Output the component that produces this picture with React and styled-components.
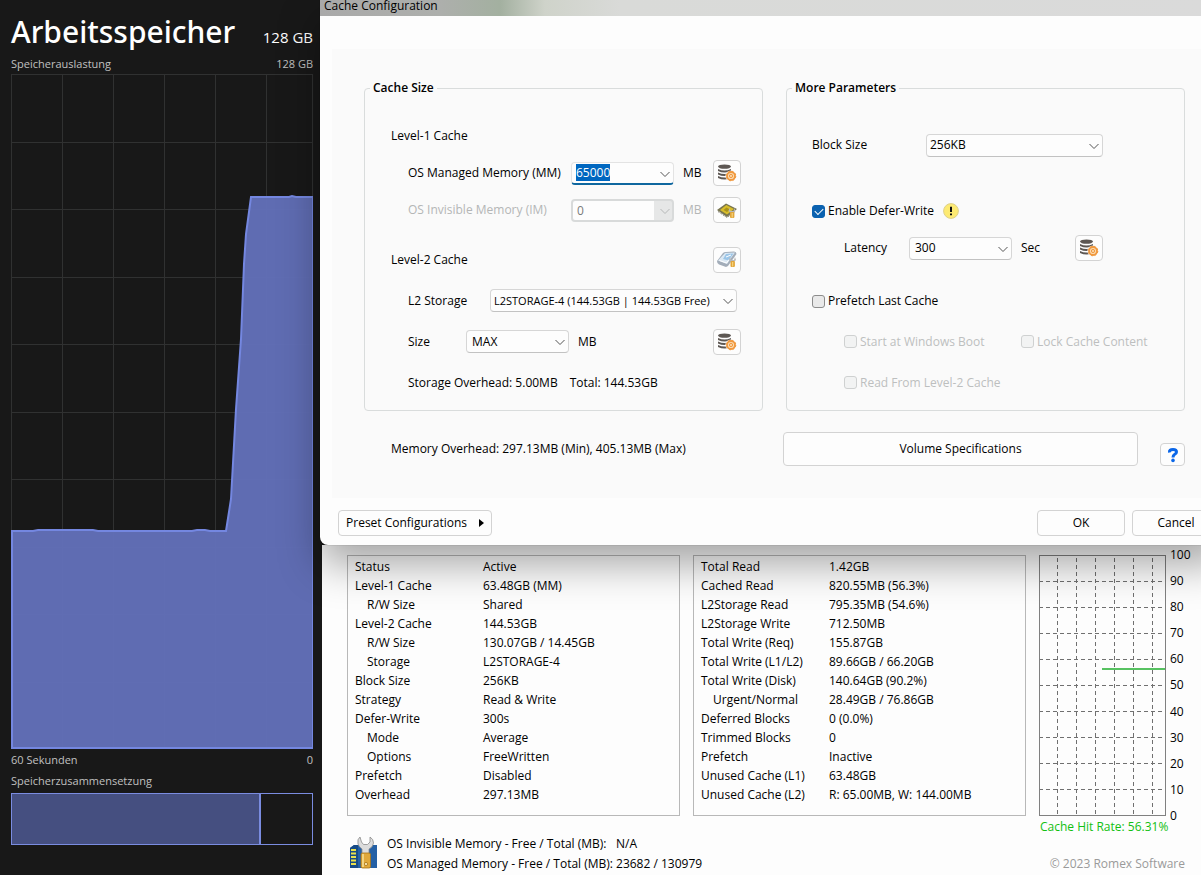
import React, { useEffect, useRef, useState } from 'react'
import styled, { createGlobalStyle } from 'styled-components'

const GlobalStyle = createGlobalStyle`
  * {
    box-sizing: border-box;
  }
  body {
    margin: 0;
    background: #181818;
    overflow-x: hidden;
  }
  body, button, input, select {
    font-family: "Open Sans", "Noto Sans", sans-serif;
    font-size: 12px;
    line-height: 16px;
    color: #000;
  }
`

const Desktop = styled.div`
  display: flex;
  min-height: 100vh;
  overflow: hidden;
`

/* ---------- task manager ---------- */

const Monitor = styled.section`
  flex: none;
  width: 320px;
  padding: 10px 7px 30px 11px;
  display: flex;
  flex-direction: column;
  color: #c0c0c0;
  font-size: 11px;
`

const MonitorHead = styled.header`
  display: flex;
  justify-content: space-between;
  align-items: baseline;
  height: 45px;
  color: #fff;
`

const MonitorTitle = styled.h1`
  margin: 0;
  font-family: "Noto Sans", sans-serif;
  font-size: 30px;
  line-height: 44px;
  font-weight: 500;
`

const Capacity = styled.span`
  font-size: 15px;
`

const Caption = styled.div`
  display: flex;
  justify-content: space-between;
  line-height: ${(p) => p.$height || 18}px;
`

const UsageChart = styled.svg`
  display: block;
  flex: 1;
  width: 100%;
  min-height: 300px;
  margin-top: 1px;
`

const Composition = styled.div`
  display: flex;
  height: 52px;
  margin-top: 2px;
  border: 1px solid #7a8ce0;
`

const InUse = styled.div`
  width: 83%;
  background: #454f80;
  border-right: 2px solid #7a8ce0;
`

const USAGE =
  'M0 457 H22 L27 456 H82 L87 457 H181 L186 456 H194 L199 457 H215 L220 425 L225 335 L230 265 L233 190 L235 160 L240 123 H278 L281 122 L285 123 H302'

function MemoryMonitor() {
  return (
    <Monitor>
      <MonitorHead>
        <MonitorTitle>Arbeitsspeicher</MonitorTitle>
        <Capacity>128 GB</Capacity>
      </MonitorHead>
      <Caption>
        <span>Speicherauslastung</span>
        <span>128 GB</span>
      </Caption>
      <UsageChart viewBox="0 0 302 675" preserveAspectRatio="none" fill="none">
        <g stroke="#303131">
          {[51, 102, 153, 204, 255].map((x) => (
            <path key={x} d={`M${x + 0.5} 0 V675`} />
          ))}
          {[68, 135, 203, 270, 338, 405, 473, 540, 608].map((y) => (
            <path key={y} d={`M0 ${y + 0.5} H302`} />
          ))}
          <rect x="0.5" y="0.5" width="301" height="674" />
        </g>
        <path d={`${USAGE} V675 H0 Z`} fill="#6371bb" fillOpacity="0.95" />
        <path d={`${USAGE} V674 H1 V457`} stroke="#7487e0" strokeWidth="2" />
      </UsageChart>
      <Caption $height={22}>
        <span>60 Sekunden</span>
        <span>0</span>
      </Caption>
      <Caption $height={20}>Speicherzusammensetzung</Caption>
      <Composition>
        <InUse />
      </Composition>
    </Monitor>
  )
}

/* ---------- shared controls ---------- */

const Button = styled.button`
  width: ${(p) => p.$width || 88}px;
  height: ${(p) => p.$height || 26}px;
  padding: 0;
  display: flex;
  align-items: center;
  justify-content: center;
  flex: none;
  background: #fdfdfd;
  border: 1px solid #d3d3d3;
  border-radius: 4px;
`

const SelectBox = styled.div`
  position: relative;
  flex: none;
  width: ${(p) => p.$width}px;
`

const Select = styled.select`
  appearance: none;
  width: 100%;
  height: 23px;
  padding: 0 14px 0 ${(p) => p.$pad || 3}px;
  font-size: ${(p) => (p.$dense ? 11 : 12)}px;
  background: #fdfdfd;
  border: 1px solid #d6d6d6;
  border-bottom-color: #c2c2c2;
  border-radius: 4px;
`

const Arrow = styled.svg`
  position: absolute;
  right: 4px;
  top: 7px;
  width: 10px;
  height: 10px;
  pointer-events: none;
`

const ComboInput = styled.input`
  display: block;
  width: 100%;
  height: 23px;
  padding: 0 24px 0 4px;
  background: #fdfdfd;
  border: 1px solid #e3e3e3;
  border-bottom: 2px solid #0f679f;
  border-radius: 4px;
  outline: none;

  &::selection {
    background: #0067c0;
    color: #fff;
  }

  &:disabled {
    color: #7a7a7a;
    border: 2px solid #d8dada;
    background: linear-gradient(to right, #fdfdfd calc(100% - 18px), #e6e7e7 0);
  }
`

const Check = styled.label`
  display: flex;
  align-items: center;
  gap: 3px;
  width: ${(p) => (p.$width ? p.$width + 'px' : 'auto')};
  color: ${(p) => (p.$off ? '#bdbfbf' : '#000')};
`

const Tick = styled.input`
  appearance: none;
  width: 13px;
  height: 13px;
  margin: 0;
  display: grid;
  place-items: center;
  background: #e9e9e9;
  border: 1px solid #8c8c8c;
  border-radius: 3px;

  &:checked {
    background: #0b62b0;
    border-color: #0b62b0;
  }

  &:checked::after {
    content: '';
    width: 7px;
    height: 4px;
    margin-top: -2px;
    border-left: 1px solid #fff;
    border-bottom: 1px solid #fff;
    transform: rotate(-45deg);
  }

  &:disabled {
    background: #f2f3f3;
    border-color: #cfd1d1;
  }
`

function Chevron({ color = '#555' }) {
  return (
    <Arrow viewBox="0 0 10 10" fill="none" stroke={color} strokeWidth="1">
      <path d="M0.5 3 L5 7.5 L9.5 3" />
    </Arrow>
  )
}

function DropDown({ id, width, pad, dense, value }) {
  return (
    <SelectBox $width={width}>
      <Select id={id} $pad={pad} $dense={dense} defaultValue={value}>
        <option>{value}</option>
      </Select>
      <Chevron />
    </SelectBox>
  )
}

function CheckBox({ label, disabled, defaultChecked, width }) {
  return (
    <Check $off={disabled} $width={width}>
      <Tick type="checkbox" disabled={disabled} defaultChecked={defaultChecked} />
      {label}
    </Check>
  )
}

/* ---------- icons ---------- */

function DatabaseIcon() {
  return (
    <svg width="20" height="18" viewBox="0 0 20 18">
      <ellipse cx="7.5" cy="2.6" rx="6.5" ry="2.2" fill="#5d5753" />
      <path d="M1 5 Q7.5 8 14 5 V7 Q7.5 10 1 7 Z" fill="#5d5753" />
      <path d="M1 8.6 Q7.5 11.6 14 8.6 V10.4 Q7.5 13.4 1 10.4 Z" fill="#5d5753" />
      <path d="M1 12 Q7.5 15 14 12 V14 Q7.5 17 1 14 Z" fill="#5d5753" />
      <circle cx="14" cy="12" r="5.6" fill="#fdfdfd" />
      <circle cx="14" cy="12" r="4" fill="#fbd9ae" stroke="#f0993f" strokeWidth="1.8" />
      <circle cx="14" cy="12" r="4.8" fill="none" stroke="#f0993f" strokeWidth="1" strokeDasharray="2 1.77" />
      <circle cx="14" cy="12" r="1.6" fill="none" stroke="#f0993f" strokeWidth="1" />
    </svg>
  )
}

function Plug({ x, y }) {
  return (
    <g transform={`translate(${x} ${y})`}>
      <path d="M0 0 L1 3 H4 L5 0 L6 3 L4 5 H1.5 L-1 3 Z" fill="#b9b9b9" />
      <rect x="0.5" y="4" width="4.4" height="6" rx="1" fill="#e2a63a" />
      <path d="M2.7 5 V9.5" stroke="#f9dd8a" />
    </g>
  )
}

function ChipIcon() {
  return (
    <svg width="20" height="17" viewBox="0 0 20 17">
      <path d="M0 8 L9 1.5 L20 7 L10 15 Z" fill="#77744f" />
      <path d="M1 9.5 L10 15.5 L18 9.5" stroke="#5f5c48" strokeDasharray="1 1" fill="none" />
      <path d="M3 8 L9.3 3 L17 7 L10 12.5 Z" fill="#d8bd2a" />
      <path d="M6.5 8 L9.5 5.5 L13 7.5 L10 10 Z" fill="#a8921c" />
      <Plug x={12.5} y={6} />
    </svg>
  )
}

function DriveIcon() {
  return (
    <svg width="20" height="17" viewBox="0 0 20 17">
      <path d="M0 10 L6 2 Q7 1 9 1 L17 0.6 Q19.5 1 19.5 3 L11 15 L9 16 L2 13.5 Q0 13 0 10 Z" fill="#a3adb9" />
      <path d="M1 9.6 L8 2 L18 1.4 L10 13 Z" fill="#dbe8f3" />
      <path d="M6 8 L9 3 L16.5 2.5 L11.5 9.5 Z" fill="#9cc6e8" />
      <path d="M2.5 9.5 L9.5 12 L12 8.5 M9 6 L14 4" stroke="#fff" fill="none" />
      <Plug x={13} y={6} />
    </svg>
  )
}

function WarningIcon() {
  return (
    <svg width="16" height="16" viewBox="0 0 16 16">
      <circle cx="8" cy="8" r="7.4" fill="#fdea72" stroke="#ddd08a" />
      <path d="M8 3.8 V9" stroke="#111" strokeWidth="2" />
      <path d="M8 10.4 V12.2" stroke="#111" strokeWidth="2" />
    </svg>
  )
}

function HelpIcon() {
  return (
    <svg width="12" height="16" viewBox="0 0 12 16" fill="none" stroke="#0a66e8" strokeWidth="3">
      <path d="M2.5 5.5 Q2 2.5 6 2.5 Q9.5 2.5 9.5 5 Q9.5 6.6 7.5 7.5 Q6 8.4 6 10.5" />
      <circle cx="6" cy="13.4" r="1.8" fill="#0a66e8" stroke="none" />
    </svg>
  )
}

function MemoryToolIcon() {
  return (
    <svg width="30" height="34" viewBox="0 0 30 34">
      <path d="M1 12 L5 9 H28 V32 H1 Z" fill="#2460a5" />
      <path d="M1 12 L5 9 H9 V32 H1 Z" fill="#174b86" />
      <path d="M2 14 H7 M2 17.5 H7 M2 21 H7 M2 24.5 H7 M2 28 H7" stroke="#e9e04c" strokeWidth="2" />
      <path
        d="M11 1 Q8 3 9 8 Q10 11 13 13 V18 H20 V13 Q24 11 24.5 7 Q24.5 3 21 1 V6 L18.5 8.5 H14.5 L12.5 6 Z"
        fill="#dcdcdc"
        stroke="#8b8b8b"
        strokeWidth="0.8"
      />
      <rect x="12" y="17" width="9.5" height="15" rx="1.5" fill="#e0a83a" stroke="#a87418" strokeWidth="0.8" />
      <path d="M14 18 V31" stroke="#f8df94" strokeWidth="1.6" />
      <circle cx="17" cy="28" r="1.6" fill="#fbe9b4" stroke="#a87418" strokeWidth="0.8" />
    </svg>
  )
}

/* ---------- cache configuration dialog ---------- */

const Windows = styled.main`
  flex: 1;
  min-width: 0;
  display: flex;
  flex-direction: column;
`

/* the dialog runs past the right edge of the screen */
const Dialog = styled.form`
  position: relative;
  z-index: 1;
  width: calc(100% + 24px);
  background: #fdfdfd;
  border-radius: 0 0 8px 8px;
  box-shadow: 0 20px 40px rgba(0, 0, 0, 0.34), 0 0 1px rgba(0, 0, 0, 0.6);
`

const TitleBar = styled.header`
  height: 16px;
  padding-left: 4px;
  line-height: 12px;
  background: linear-gradient(to right, #a9a9a9 0, #adafac 120px, #a3b0a0 180px, #cfd3ca 225px, #d9dad8 300px, #dadada);
`

const DialogBody = styled.div`
  margin: 33px 12px 0;
  padding: 30px 28px 32px 32px;
  background: #fafafa;
`

const Groups = styled.div`
  display: grid;
  grid-template-columns: 1fr 1fr;
  gap: 23px;
`

const Group = styled.fieldset`
  margin: 0;
  min-width: 0;
  padding: ${(p) => p.$top}px 21px 7px ${(p) => p.$left}px;
  border: 1px solid #d9dcdc;
  border-radius: 4px;
`

const Legend = styled.legend`
  margin-left: ${(p) => p.$shift}px;
  padding: 0 3px;
  line-height: 18px;
  font-weight: 600;
`

const Row = styled.div`
  display: flex;
  align-items: center;
  height: ${(p) => p.$height || 38}px;
  margin-top: ${(p) => p.$space || 0}px;
  padding-left: ${(p) => p.$indent || 0}px;
  color: ${(p) => (p.$off ? '#b4b6b6' : '#000')};

  > button {
    margin-left: auto;
  }
`

const Label = styled.label`
  flex: none;
  width: ${(p) => p.$width}px;
  white-space: nowrap;
`

const Unit = styled.span`
  margin-left: 9px;
`

const Total = styled.span`
  margin-left: 12px;
`

const Summary = styled.div`
  display: flex;
  align-items: center;
  gap: 22px;
  margin-top: 21px;
  padding-left: 27px;

  > span {
    flex: 1;
  }

  > button:last-child {
    align-self: flex-end;
  }
`

const DialogFooter = styled.footer`
  display: flex;
  align-items: center;
  gap: 7px;
  padding: 12px 5px 9px 18px;
`

const Spacer = styled.div`
  flex: 1;
`

const Caret = styled.span`
  margin-left: 12px;
  border: 4px solid transparent;
  border-left: 5px solid #000;
  border-right: 0;
`

function CacheSize() {
  const [managed, setManaged] = useState('65000')
  const managedRef = useRef(null)

  useEffect(() => {
    managedRef.current.focus()
    managedRef.current.select()
  }, [])

  return (
    <Group $top={20} $left={26}>
      <Legend $shift={-21}>Cache Size</Legend>
      <Row>Level-1 Cache</Row>
      <Row $indent={17} $height={36}>
        <Label htmlFor="managed" $width={163}>OS Managed Memory (MM)</Label>
        <SelectBox $width={103}>
          <ComboInput
            id="managed"
            ref={managedRef}
            value={managed}
            onChange={(e) => setManaged(e.target.value)}
          />
          <Chevron />
        </SelectBox>
        <Unit>MB</Unit>
        <Button type="button" $width={28} aria-label="Managed memory settings"><DatabaseIcon /></Button>
      </Row>
      <Row $indent={17} $off>
        <Label htmlFor="invisible" $width={163}>OS Invisible Memory (IM)</Label>
        <SelectBox $width={103}>
          <ComboInput id="invisible" defaultValue="0" disabled />
          <Chevron color="#b5b7b7" />
        </SelectBox>
        <Unit>MB</Unit>
        <Button type="button" $width={28} aria-label="Invisible memory settings"><ChipIcon /></Button>
      </Row>
      <Row $height={41} $space={10}>
        Level-2 Cache
        <Button type="button" $width={28} aria-label="Level-2 storage settings"><DriveIcon /></Button>
      </Row>
      <Row $indent={17} $height={41}>
        <Label htmlFor="storage" $width={82}>L2 Storage</Label>
        <DropDown id="storage" width={247} dense value="L2STORAGE-4 (144.53GB | 144.53GB Free)" />
      </Row>
      <Row $indent={17} $height={41}>
        <Label htmlFor="size" $width={58}>Size</Label>
        <DropDown id="size" width={103} pad={5} value="MAX" />
        <Unit>MB</Unit>
        <Button type="button" $width={28} aria-label="Level-2 size settings"><DatabaseIcon /></Button>
      </Row>
      <Row $indent={17} $height={41}>
        <span>Storage Overhead: 5.00MB</span>
        <Total>Total: 144.53GB</Total>
      </Row>
    </Group>
  )
}

const LatencyRow = styled(Row)`
  > button {
    margin-left: auto;
    margin-right: 60px;
  }
`

function MoreParameters() {
  return (
    <Group $top={29} $left={25}>
      <Legend $shift={-20}>More Parameters</Legend>
      <Row>
        <Label htmlFor="block" $width={114}>Block Size</Label>
        <DropDown id="block" width={177} value="256KB" />
      </Row>
      <Row $space={28}>
        <CheckBox label="Enable Defer-Write" defaultChecked width={131} />
        <WarningIcon />
      </Row>
      <LatencyRow $indent={32} $height={36}>
        <Label htmlFor="latency" $width={65}>Latency</Label>
        <DropDown id="latency" width={103} pad={5} value="300" />
        <Unit>Sec</Unit>
        <Button type="button" $width={28} aria-label="Latency settings"><DatabaseIcon /></Button>
      </LatencyRow>
      <Row $space={16}>
        <CheckBox label="Prefetch Last Cache" />
      </Row>
      <Row $indent={32} $height={41} $space={1}>
        <CheckBox label="Start at Windows Boot" disabled width={177} />
        <CheckBox label="Lock Cache Content" disabled />
      </Row>
      <Row $indent={32} $height={41}>
        <CheckBox label="Read From Level-2 Cache" disabled />
      </Row>
    </Group>
  )
}

function CacheDialog() {
  return (
    <Dialog onSubmit={(e) => e.preventDefault()}>
      <TitleBar>Cache Configuration</TitleBar>
      <DialogBody>
        <Groups>
          <CacheSize />
          <MoreParameters />
        </Groups>
        <Summary>
          <span>Memory Overhead: 297.13MB (Min), 405.13MB (Max)</span>
          <Button type="button" $width={355} $height={34}>Volume Specifications</Button>
          <Button type="button" $width={25} $height={23} aria-label="Help"><HelpIcon /></Button>
        </Summary>
      </DialogBody>
      <DialogFooter>
        <Button type="button" $width={154}>
          Preset Configurations
          <Caret />
        </Button>
        <Spacer />
        <Button type="submit">OK</Button>
        <Button type="button">Cancel</Button>
      </DialogFooter>
    </Dialog>
  )
}

/* ---------- statistics window ---------- */

const StatsWindow = styled.section`
  flex: 1;
  display: grid;
  grid-template-columns: 1fr 1fr 162px;
  grid-template-rows: 261px 1fr;
  column-gap: 13px;
  margin-left: 2px;
  padding: 10px 0 0 25px;
  background: #fdfdfd;
`

const Panel = styled.div`
  padding: 1px 7px;
  border: 1px solid #b8b8b8;
`

const StatTable = styled.table`
  width: 100%;
  border-collapse: collapse;
  table-layout: fixed;
`

const StatName = styled.th`
  width: 128px;
  height: 19px;
  padding: 0 0 0 ${(p) => (p.$sub ? 12 : 0)}px;
  text-align: left;
  font-weight: 400;
  white-space: nowrap;
`

const StatValue = styled.td`
  padding: 0;
`

const HitRate = styled.div`
  display: flex;
  gap: 4px;
`

const HitChart = styled.svg`
  width: 127px;
  height: 261px;
`

const Axis = styled.div`
  display: flex;
  flex-direction: column;
  justify-content: space-between;
  margin: -8px 0;
`

const StatusBar = styled.footer`
  grid-column: span 2;
  display: flex;
  gap: 8px;
  padding: 18px 0 0 2px;

  > svg {
    margin-top: 2px;
  }
`

const MemoryTable = styled.table`
  border-collapse: collapse;
  align-self: flex-start;
  white-space: nowrap;

  th, td {
    height: 20px;
    padding: 0;
    text-align: left;
    font-weight: 400;
  }

  th {
    padding-right: 3px;
  }
`

const Side = styled.div`
  display: flex;
  flex-direction: column;
  justify-content: space-between;
  padding: 3px 16px 3px 1px;
  white-space: nowrap;
`

const Rate = styled.span`
  color: #12c012;
`

const Copyright = styled.span`
  align-self: flex-end;
  color: #9a9a9a;
`

const cacheStats = [
  ['Status', 'Active'],
  ['Level-1 Cache', '63.48GB (MM)'],
  ['R/W Size', 'Shared', true],
  ['Level-2 Cache', '144.53GB'],
  ['R/W Size', '130.07GB / 14.45GB', true],
  ['Storage', 'L2STORAGE-4', true],
  ['Block Size', '256KB'],
  ['Strategy', 'Read & Write'],
  ['Defer-Write', '300s'],
  ['Mode', 'Average', true],
  ['Options', 'FreeWritten', true],
  ['Prefetch', 'Disabled'],
  ['Overhead', '297.13MB'],
]

const ioStats = [
  ['Total Read', '1.42GB'],
  ['Cached Read', '820.55MB (56.3%)'],
  ['L2Storage Read', '795.35MB (54.6%)'],
  ['L2Storage Write', '712.50MB'],
  ['Total Write (Req)', '155.87GB'],
  ['Total Write (L1/L2)', '89.66GB / 66.20GB'],
  ['Total Write (Disk)', '140.64GB (90.2%)'],
  ['Urgent/Normal', '28.49GB / 76.86GB', true],
  ['Deferred Blocks', '0 (0.0%)'],
  ['Trimmed Blocks', '0'],
  ['Prefetch', 'Inactive'],
  ['Unused Cache (L1)', '63.48GB'],
  ['Unused Cache (L2)', 'R: 65.00MB, W: 144.00MB'],
]

const ticks = [100, 90, 80, 70, 60, 50, 40, 30, 20, 10, 0]

function StatPanel({ rows }) {
  return (
    <Panel>
      <StatTable>
        <tbody>
          {rows.map(([name, value, sub], i) => (
            <tr key={i}>
              <StatName scope="row" $sub={sub}>{name}</StatName>
              <StatValue>{value}</StatValue>
            </tr>
          ))}
        </tbody>
      </StatTable>
    </Panel>
  )
}

function Statistics() {
  return (
    <StatsWindow>
      <StatPanel rows={cacheStats} />
      <StatPanel rows={ioStats} />
      <HitRate>
        <HitChart viewBox="0 0 127 261" fill="none">
          <g stroke="#707070" strokeDasharray="4 3">
            {[18, 37, 56, 75, 94, 113].map((x) => (
              <path key={x} d={`M${x + 0.5} 3 V260`} />
            ))}
            {ticks.slice(1, -1).map((t) => (
              <path key={t} d={`M0 ${260.5 - t * 2.6} H127`} />
            ))}
          </g>
          <rect x="0.5" y="0.5" width="126" height="260" stroke="#808080" />
          <path d="M63 114 H126" stroke="#1fae2c" strokeWidth="1.5" />
        </HitChart>
        <Axis>
          {ticks.map((t) => (
            <span key={t}>{t}</span>
          ))}
        </Axis>
      </HitRate>
      <StatusBar>
        <MemoryToolIcon />
        <MemoryTable>
          <tbody>
            <tr>
              <th scope="row">OS Invisible Memory - Free / Total (MB):</th>
              <td>N/A</td>
            </tr>
            <tr>
              <th scope="row">OS Managed Memory - Free / Total (MB):</th>
              <td>23682 / 130979</td>
            </tr>
          </tbody>
        </MemoryTable>
      </StatusBar>
      <Side>
        <Rate>Cache Hit Rate: 56.31%</Rate>
        <Copyright>© 2023 Romex Software</Copyright>
      </Side>
    </StatsWindow>
  )
}

export default function App() {
  return (
    <>
      <GlobalStyle />
      <Desktop>
        <MemoryMonitor />
        <Windows>
          <CacheDialog />
          <Statistics />
        </Windows>
      </Desktop>
    </>
  )
}
